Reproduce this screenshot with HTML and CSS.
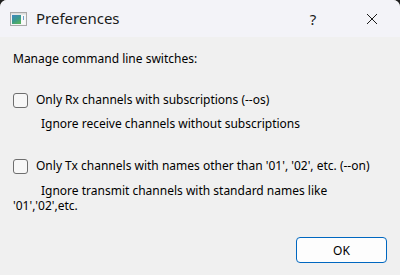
FILE: index.html
```html
<!DOCTYPE html>
<html>
<head>
<meta charset="utf-8">
<link rel="stylesheet" href="styles.css">
</head>
<body>
<div class="window">
  <div class="titlebar">
    <svg class="app-icon" width="17" height="14" viewBox="0 0 17 14">
      <defs>
        <linearGradient id="g" x1="0" y1="0" x2="0.6" y2="1">
          <stop offset="0" stop-color="#3f86c4"/>
          <stop offset="0.6" stop-color="#3a9a8a"/>
          <stop offset="1" stop-color="#55b060"/>
        </linearGradient>
      </defs>
      <rect x="0.5" y="0.5" width="16" height="13" fill="#f4f4f4" stroke="#a8a8a8"/>
      <rect x="1" y="1" width="15" height="1.5" fill="#dcdcdc"/>
      <rect x="2" y="3" width="9" height="9" fill="url(#g)"/>
      <rect x="11" y="3" width="4" height="9" fill="#f8f8f8"/>
      <rect x="13" y="4" width="1" height="4" fill="#6ea0cc"/>
    </svg>
    <span class="title">Preferences</span>
    <span class="spacer"></span>
    <span class="tb-btn help">?</span>
    <span class="tb-btn close">
      <svg width="12" height="12" viewBox="0 0 12 12"><path d="M1 1L11 11M11 1L1 11" stroke="#1a1a1a" stroke-width="1"/></svg>
    </span>
  </div>
  <div class="content">
    <div class="heading">Manage command line switches:</div>
    <label class="check-row rx">
      <span class="box"></span>
      <span>Only Rx channels with subscriptions (--os)</span>
    </label>
    <div class="desc indent">Ignore receive channels without subscriptions</div>
    <label class="check-row tx">
      <span class="box"></span>
      <span>Only Tx channels with names other than '01', '02', etc. (--on)</span>
    </label>
    <div class="desc wrap"><span class="lead"></span>Ignore transmit channels with standard names like '01','02',etc.</div>
    <div class="buttons">
      <button class="ok">OK</button>
    </div>
  </div>
</div>
</body>
</html>
```
FILE: styles.css
```css
html, body {
  margin: 0;
  padding: 0;
  background: #202020;
}
body {
  width: 400px;
  height: 275px;
  font-family: "Segoe UI", "Noto Sans", sans-serif;
  font-size: 12px;
  color: #000;
}
.window {
  width: 400px;
  height: 275px;
  background: #f0f0f0;
  border-radius: 7px 7px 0 0;
  overflow: hidden;
  display: flex;
  flex-direction: column;
}
.titlebar {
  height: 37px;
  background: #f3f3f8;
  display: flex;
  align-items: center;
  flex-shrink: 0;
}
.app-icon {
  margin-left: 10px;
  margin-right: 9px;
}
.title {
  font-size: 15px;
  color: #1a1a1a;
  margin-top: -1px;
}
.spacer { flex: 1; }
.tb-btn {
  width: 46px;
  height: 37px;
  display: flex;
  align-items: center;
  justify-content: center;
  color: #1a1a1a;
}
.help {
  font-size: 15px;
  margin-right: 13px;
}
.close { margin-right: 5px; }
.content {
  flex: 1;
  padding: 14px 13px 0 13px;
  display: flex;
  flex-direction: column;
}
.heading {
  line-height: 16px;
  margin-bottom: 25px;
}
.check-row {
  display: flex;
  align-items: center;
  gap: 8px;
  height: 16px;
  line-height: 16px;
}
.box {
  width: 13px;
  height: 13px;
  border: 1px solid #6e6e6e;
  border-radius: 3px;
  background: #f7f7f7;
  flex-shrink: 0;
}
.desc {
  line-height: 16px;
}
.indent {
  margin: 8px 0 0 28px;
}
.tx {
  margin-top: 26px;
}
.wrap {
  margin-top: 9px;
  width: 330px;
  line-height: 15px;
}
.lead {
  display: inline-block;
  width: 28px;
}
.buttons {
  margin-top: auto;
  display: flex;
  justify-content: flex-end;
  padding: 0 0 12px 0;
}
.ok {
  width: 91px;
  height: 26px;
  background: #fdfdfd;
  border: 1px solid #0067c0;
  border-radius: 4px;
  font-family: inherit;
  font-size: 12px;
  color: #000;
}
```
